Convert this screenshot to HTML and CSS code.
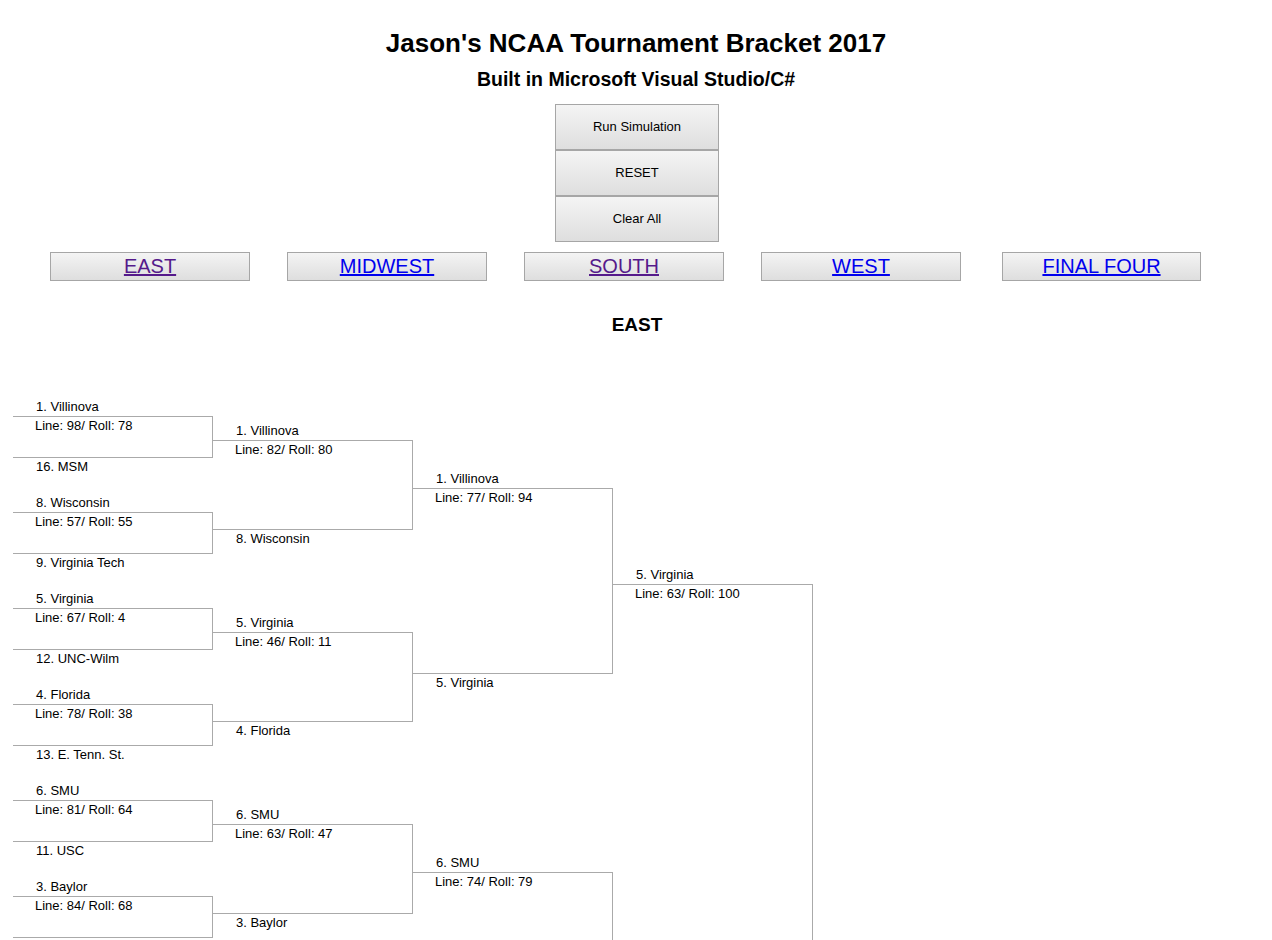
FILE: index.html
```html
<!DOCTYPE html>
<html lang="en">
<head>
<meta charset="utf-8">
<title>Jason's NCAA Tournament Bracket 2017</title>
<link rel="stylesheet" href="styles.css">
</head>
<body>
<header class="head">
  <h1 class="title">Jason's NCAA Tournament Bracket 2017</h1>
  <h2 class="subtitle">Built in Microsoft Visual Studio/C#</h2>
</header>

<div class="controls">
  <button class="ctrl" type="button">Run Simulation</button>
  <button class="ctrl" type="button">RESET</button>
  <button class="ctrl" type="button">Clear All</button>
</div>

<nav class="regions">
  <div class="region-btn"><a class="region-link visited" href="#east">EAST</a></div>
  <div class="region-btn"><a class="region-link" href="#midwest">MIDWEST</a></div>
  <div class="region-btn"><a class="region-link visited" href="#south">SOUTH</a></div>
  <div class="region-btn"><a class="region-link" href="#west">WEST</a></div>
  <div class="region-btn final"><a class="region-link" href="#final">FINAL FOUR</a></div>
</nav>

<h3 class="region-title">EAST</h3>

<div class="bracket">
  <div class="round r1">
    <div class="match"><div class="team">1. Villinova</div><div class="box"><div class="score">Line: 98/ Roll: 78</div></div><div class="team low">16. MSM</div></div>
    <div class="match"><div class="team">8. Wisconsin</div><div class="box"><div class="score">Line: 57/ Roll: 55</div></div><div class="team low">9. Virginia Tech</div></div>
    <div class="match"><div class="team">5. Virginia</div><div class="box"><div class="score">Line: 67/ Roll: 4</div></div><div class="team low">12. UNC-Wilm</div></div>
    <div class="match"><div class="team">4. Florida</div><div class="box"><div class="score">Line: 78/ Roll: 38</div></div><div class="team low">13. E. Tenn. St.</div></div>
    <div class="match"><div class="team">6. SMU</div><div class="box"><div class="score">Line: 81/ Roll: 64</div></div><div class="team low">11. USC</div></div>
    <div class="match"><div class="team">3. Baylor</div><div class="box"><div class="score">Line: 84/ Roll: 68</div></div><div class="team low">14. NM State</div></div>
    <div class="match"><div class="team">7. S. Carolina</div><div class="box"><div class="score">Line: 61/ Roll: 52</div></div><div class="team low">10. Marquette</div></div>
    <div class="match"><div class="team">2. Duke</div><div class="box"><div class="score">Line: 91/ Roll: 40</div></div><div class="team low">15. Troy</div></div>
  </div>
  <div class="round r2">
    <div class="match"><div class="team">1. Villinova</div><div class="box"><div class="score">Line: 82/ Roll: 80</div></div><div class="team low">8. Wisconsin</div></div>
    <div class="match"><div class="team">5. Virginia</div><div class="box"><div class="score">Line: 46/ Roll: 11</div></div><div class="team low">4. Florida</div></div>
    <div class="match"><div class="team">6. SMU</div><div class="box"><div class="score">Line: 63/ Roll: 47</div></div><div class="team low">3. Baylor</div></div>
    <div class="match"><div class="team">7. S. Carolina</div><div class="box"><div class="score">Line: 29/ Roll: 62</div></div><div class="team low">2. Duke</div></div>
  </div>
  <div class="round r3">
    <div class="match"><div class="team">1. Villinova</div><div class="box"><div class="score">Line: 77/ Roll: 94</div></div><div class="team low">5. Virginia</div></div>
    <div class="match"><div class="team">6. SMU</div><div class="box"><div class="score">Line: 74/ Roll: 79</div></div><div class="team low">2. Duke</div></div>
  </div>
  <div class="round r4">
    <div class="match"><div class="team">5. Virginia</div><div class="box"><div class="score">Line: 63/ Roll: 100</div></div><div class="team low">2. Duke</div></div>
  </div>
</div>
</body>
</html>
```

FILE: styles.css
```css
html, body {
  background: #ffffff;
}

body {
  margin: 8px;
  font-family: "Liberation Sans", Arial, sans-serif;
  color: #000000;
}

.head {
  text-align: center;
}

.title {
  margin: 20px 0 0 0;
  font-size: 26px;
  line-height: 30px;
  font-weight: bold;
}

.subtitle {
  margin: 9px 0 0 0;
  font-size: 19.5px;
  line-height: 24px;
  font-weight: bold;
}

.controls {
  display: flex;
  flex-direction: column;
  align-items: center;
  margin-top: 13px;
  padding-left: 2px;
}

.ctrl {
  display: block;
  width: 164px;
  height: 46px;
  margin: 0;
  padding: 0 0 2px 0;
  border: 1px solid #a6a6a6;
  border-radius: 0;
  background: linear-gradient(#f4f4f4, #dedede);
  font-family: "Liberation Sans", Arial, sans-serif;
  font-size: 13px;
  color: #000000;
}

.regions {
  display: flex;
  gap: 37px;
  margin-top: 10px;
  padding-left: 42px;
}

.region-btn {
  box-sizing: border-box;
  width: 200px;
  height: 29px;
  padding-top: 1px;
  border: 1px solid #a6a6a6;
  background: linear-gradient(#f4f4f4, #dedede);
  text-align: center;
  font-size: 20px;
  line-height: 24px;
}

.region-btn.final {
  width: 199px;
  margin-left: 4px;
}

.region-link {
  color: #0000ee;
  text-decoration: underline;
}

.region-link.visited {
  color: #551a8b;
}

.region-title {
  margin: 32px 0 0 0;
  text-align: center;
  font-size: 19px;
  line-height: 24px;
  font-weight: bold;
  padding-left: 2px;
}

.bracket {
  display: flex;
  align-items: flex-start;
  margin: 60px 0 0 5px;
}

.round {
  display: flex;
  flex-direction: column;
  width: 200px;
}

.team,
.score {
  font-size: 13px;
  line-height: 19px;
  height: 19px;
  white-space: nowrap;
}

.team {
  padding-left: 23px;
}

.team.low {
  margin-top: -1px;
}

.score {
  padding-left: 22px;
  margin-top: -1px;
}

.box {
  box-sizing: border-box;
  border-top: 1px solid #aaaaaa;
  border-right: 1px solid #aaaaaa;
  border-bottom: 1px solid #aaaaaa;
}

.r1 { gap: 17px; }
.r1 .box { height: 42px; }

.r2 { gap: 65px; padding-top: 24px; }
.r2 .box { height: 90px; }

.r3 { gap: 161px; padding-top: 72px; }
.r3 .box { height: 186px; }

.r4 { padding-top: 168px; }
.r4 .box { height: 378px; }
```
